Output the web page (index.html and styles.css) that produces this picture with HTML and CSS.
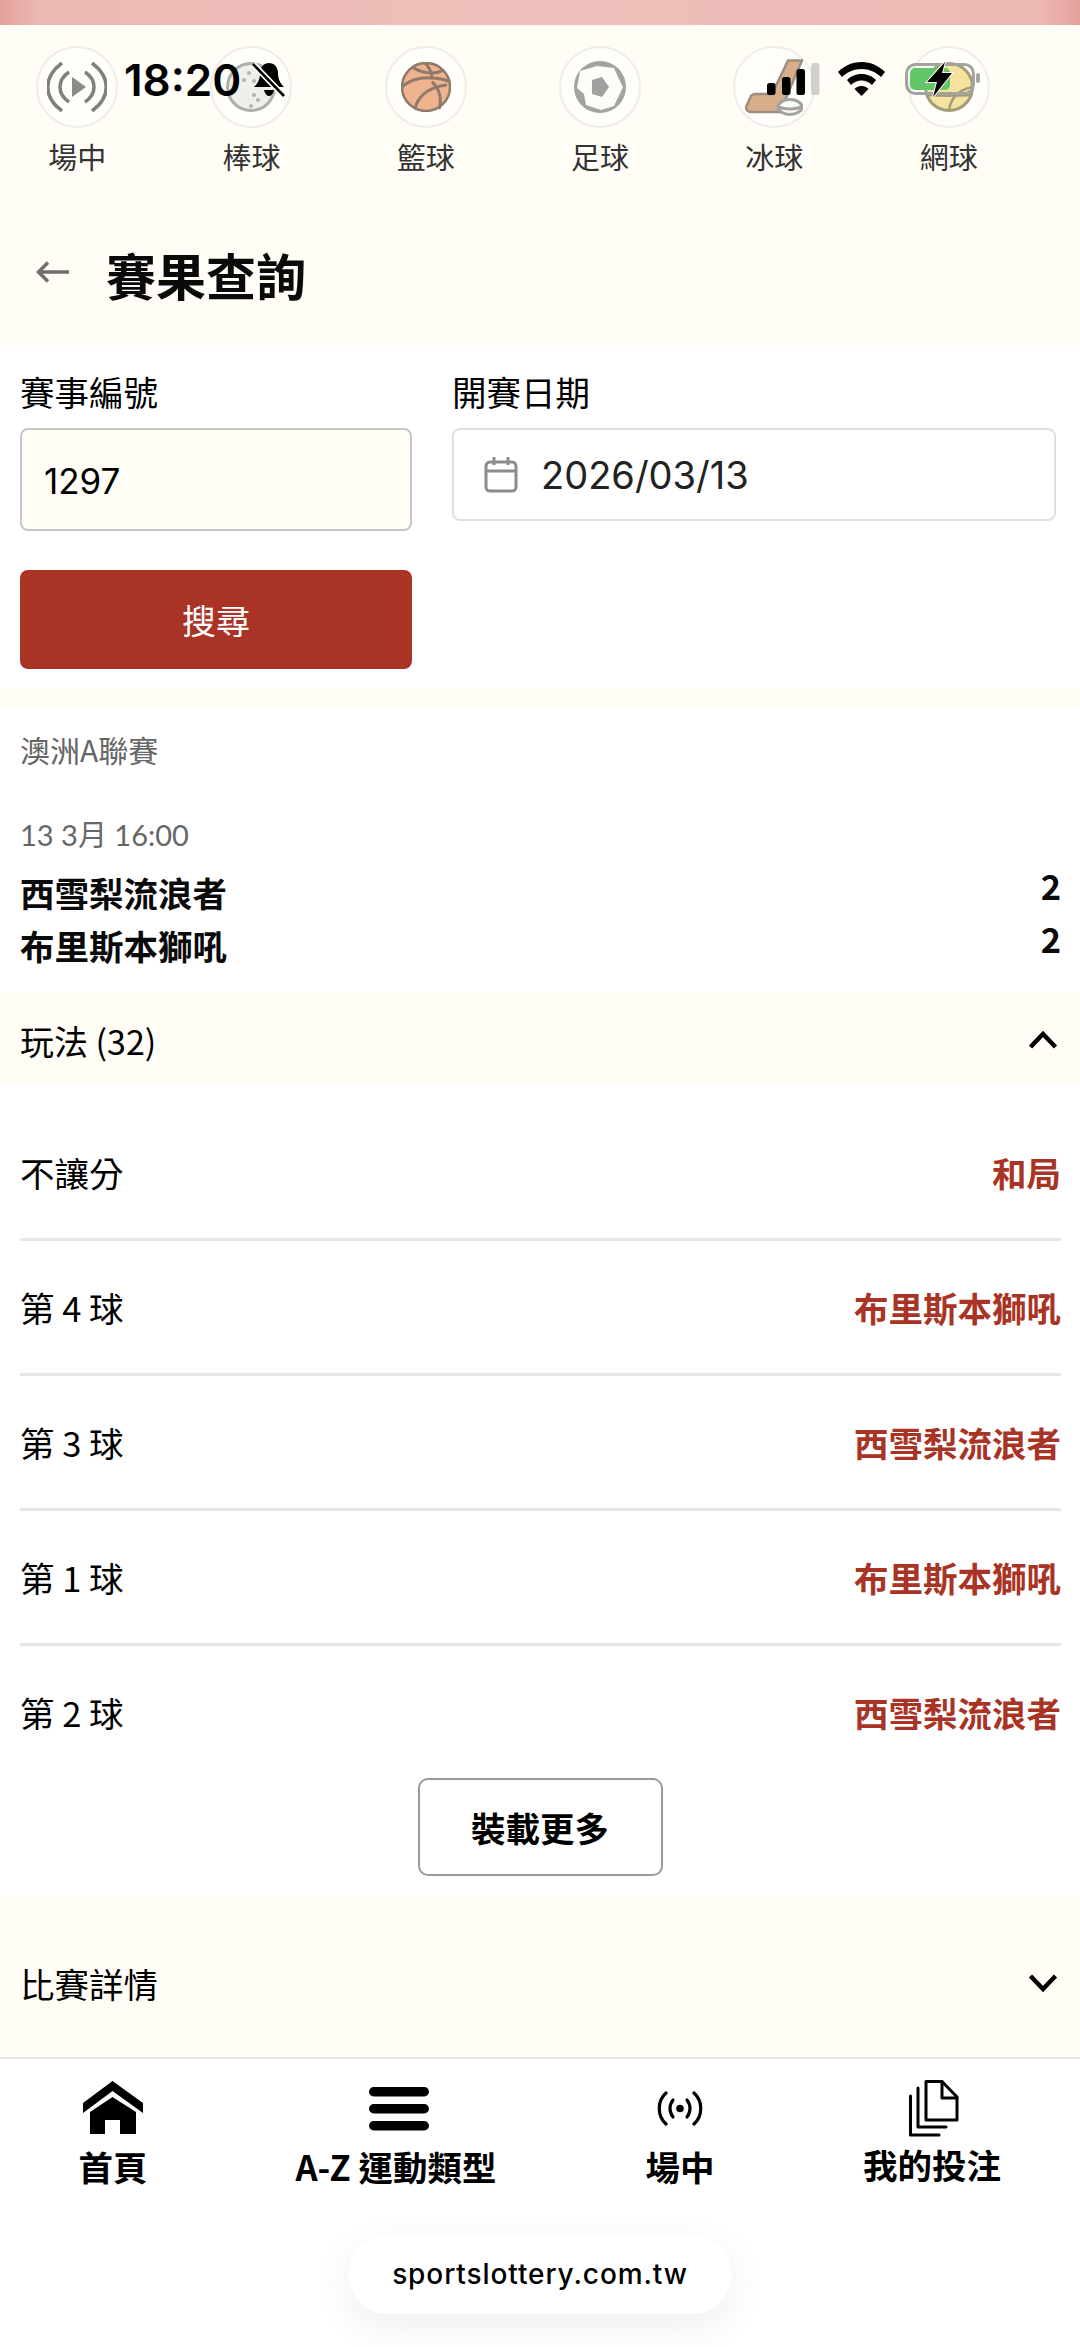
FILE: index.html
```html
<!DOCTYPE html>
<html>
<head>
    <title>賽果查詢</title>
    <link rel="stylesheet" href="styles.css">
</head>
<body>
    <!-- phone status bar sits over the sport list -->
    <div class="status-bar">
        <span class="status-time">18:20</span>
        <svg class="status-bell" viewBox="0 0 33 36"><path d="M17 1c5 0 9 4 9 10 0 6 2 10 6 14H2c4-4 6-8 6-14 0-6 4-10 9-10zM12 28h10c-1 4-3 6-5 6s-4-2-5-6z"/><path d="M1 2l31 32" stroke="#fffdf6" stroke-width="6"/><path d="M1 2l31 32" stroke="#000" stroke-width="2.6"/></svg>
        <svg class="status-signal" viewBox="0 0 53 33"><rect x="0" y="21" width="8.5" height="12" rx="2.5"/><rect x="15" y="15" width="8.5" height="18" rx="2.5"/><rect x="29.5" y="7" width="8.5" height="26" rx="2.5"/><rect x="44" y="1" width="8.5" height="32" rx="2.5" fill="#cfcfcb"/></svg>
        <svg class="status-wifi" viewBox="0 0 47 34"><path d="M23.5 0C33 0 41 4 47 10l-4 5c-5-5-12-8-19.5-8S9 10 4 15l-4-5C6 4 14 0 23.5 0z"/><path d="M23.5 12c6 0 11 2.5 14.5 6l-4 5c-3-3-6.5-4.5-10.5-4.5S16 20 13 23l-4-5c3.5-3.5 8.5-6 14.5-6z"/><path d="M23.5 24c3 0 5 1 7 3l-7 7-7-7c2-2 4-3 7-3z"/></svg>
        <svg class="status-battery" viewBox="0 0 78 38"><rect x="3.5" y="4.5" width="67" height="29" rx="9" fill="none" stroke="#a3a3a0" stroke-width="3"/><rect x="7" y="8" width="40" height="22" rx="5" fill="#62c768"/><rect x="73" y="13" width="4" height="10" rx="2" fill="#a3a3a0"/><path d="M42 2L24 22h10l-4 15 19-24H39z" stroke="#fffdf6" stroke-width="2" paint-order="stroke"/></svg>
    </div>

    <div class="top-tint"></div>

    <div class="head-area">
        <div class="sport-list">
            <div class="sport">
                <div class="sport-icon">
                    <svg viewBox="0 0 60 50" class="sport-svg sport-live"><g fill="none" stroke="#7f7f7d" stroke-width="3.5"><path d="M15 1C-4 15-4 35 15 49"/><path d="M45 1c19 14 19 34 0 48"/><path d="M22 10C10 18 10 32 22 40"/><path d="M38 10c12 8 12 22 0 30"/></g><path d="M25 15l14 10-14 10z" fill="#8a8a88"/></svg>
                </div>
                <span>場中</span>
            </div>
            <div class="sport">
                <div class="sport-icon">
                    <svg viewBox="0 0 50 50" class="sport-svg"><circle cx="25" cy="25" r="23.5" fill="#f0efeb" stroke="#aeaeab" stroke-width="3"/><g fill="#b3b3b0"><circle cx="23" cy="11" r="2"/><circle cx="18" cy="18" r="2"/><circle cx="28" cy="19" r="2"/><circle cx="32" cy="38" r="2"/><circle cx="25" cy="44" r="2"/><circle cx="28" cy="33" r="2"/></g></svg>
                </div>
                <span>棒球</span>
            </div>
            <div class="sport">
                <div class="sport-icon">
                    <svg viewBox="0 0 50 50" class="sport-svg"><circle cx="25" cy="25" r="24" fill="#efb38d" stroke="#8f7a6b" stroke-width="2.5"/><g fill="none" stroke="#8f7a6b" stroke-width="3"><path d="M1 25C8 18 20 15 30 16c7 0 13 1 19 4"/><path d="M11 5c6 4 14 6 20 6 4 0 8-1 11-3"/><path d="M24 1c4 4 7 10 7 16"/><path d="M14 47c2-11 12-22 32-24"/><path d="M38 47c3-9 1-20-7-27"/></g></svg>
                </div>
                <span>籃球</span>
            </div>
            <div class="sport">
                <div class="sport-icon">
                    <svg viewBox="0 0 52 52" class="sport-svg sport-ball"><circle cx="26" cy="26" r="26" fill="#a3a3a0"/><path d="M6 10l17-5 17 2 4 9 5 10-9 19-13 4-15-5-2-11-7-6z" fill="#fcfcf9"/><path d="M18 19l10-3 7 10-7 10-10-3z" fill="#a0a09e"/></svg>
                </div>
                <span>足球</span>
            </div>
            <div class="sport">
                <div class="sport-icon">
                    <svg viewBox="0 0 58 57" class="sport-svg sport-hockey"><path d="M43 1.5h14L35 53H6c-3 0-5-2-5-5l5-11c1-1 2-2 4-2h17z" fill="#d8ae8b" stroke="#9a8f82" stroke-width="2.5"/><ellipse cx="45" cy="48" rx="12" ry="7.5" fill="#fbfbf8" stroke="#a2a2a0" stroke-width="3"/><path d="M33 47c5 4 19 4 24 0" fill="none" stroke="#a2a2a0" stroke-width="3"/></svg>
                </div>
                <span>冰球</span>
            </div>
            <div class="sport">
                <div class="sport-icon">
                    <svg viewBox="0 0 50 50" class="sport-svg"><circle cx="25" cy="25" r="23.5" fill="#f5e29f" stroke="#a59c7a" stroke-width="3"/><g fill="none" stroke="#a59c7a" stroke-width="2.5"><path d="M2 33c15 1 30 1 46 0"/><path d="M25 48c2-13 10-20 23-23"/></g></svg>
                </div>
                <span>網球</span>
            </div>
        </div>

        <div class="page-title">
            <svg class="back-arrow" viewBox="0 0 34 22"><path d="M33 11H3M12 1.5L2.5 11l9.5 9.5" fill="none" stroke="#6f6f6d" stroke-width="3.5"/></svg>
            <h1>賽果查詢</h1>
        </div>
    </div>

    <div class="search-form">
        <div class="fields">
            <div class="field">
                <label>賽事編號</label>
                <div class="input input-id">1297</div>
            </div>
            <div class="field">
                <label>開賽日期</label>
                <div class="input input-date">
                    <svg viewBox="0 0 34 36"><g fill="none" stroke="#8c8c8c" stroke-width="3"><rect x="2" y="5" width="30" height="29" rx="4"/><path d="M2 14h30M10 0v8M24 0v8"/></g></svg>
                    <span>2026/03/13</span>
                </div>
            </div>
        </div>
        <button class="search-btn">搜尋</button>
    </div>

    <div class="gap-band"></div>

    <div class="match">
        <div class="league">澳洲A聯賽</div>
        <div class="match-time">13 3月 16:00</div>
        <div class="team-row"><span>西雪梨流浪者</span><span class="score">2</span></div>
        <div class="team-row"><span>布里斯本獅吼</span><span class="score">2</span></div>
    </div>

    <div class="band band-plays">
        <span>玩法 (32)</span>
        <svg class="chevron" viewBox="0 0 30 18"><path d="M2.5 16L15 3l12.5 13" fill="none" stroke="#000" stroke-width="4.5"/></svg>
    </div>

    <div class="result-list">
        <div class="result-row"><span>不讓分</span><span class="result-val">和局</span></div>
        <div class="result-row"><span>第 4 球</span><span class="result-val">布里斯本獅吼</span></div>
        <div class="result-row"><span>第 3 球</span><span class="result-val">西雪梨流浪者</span></div>
        <div class="result-row"><span>第 1 球</span><span class="result-val">布里斯本獅吼</span></div>
        <div class="result-row"><span>第 2 球</span><span class="result-val">西雪梨流浪者</span></div>
    </div>

    <div class="more-wrap">
        <button class="more-btn">裝載更多</button>
    </div>

    <div class="band band-details">
        <span>比賽詳情</span>
        <svg class="chevron" viewBox="0 0 30 18"><path d="M2.5 2L15 15 27.5 2" fill="none" stroke="#000" stroke-width="4.5"/></svg>
    </div>

    <div class="bottom-nav">
        <div class="nav-item nav-home">
            <svg class="nav-icon" width="60" height="54" viewBox="0 0 60 54"><path d="M29.5 0L60 22v10L29.5 10 0 32V22z"/><path d="M29.5 16L53 31v22H37V39H22v14H7V31z"/></svg>
            <span>首頁</span>
        </div>
        <div class="nav-item nav-az">
            <svg class="nav-icon" width="60" height="44" viewBox="0 0 60 44"><rect y="0" width="60" height="9.5" rx="4.7"/><rect y="17" width="60" height="9.5" rx="4.7"/><rect y="34" width="60" height="9.5" rx="4.7"/></svg>
            <span>A-Z 運動類型</span>
        </div>
        <div class="nav-item nav-live">
            <svg class="nav-icon" width="46" height="36" viewBox="0 0 46 36"><circle cx="23" cy="17.5" r="3.8"/><g fill="none" stroke="#000" stroke-width="3.2" stroke-linecap="round"><path d="M9 2C0 10 0 25 9 33"/><path d="M37 2c9 8 9 23 0 31"/><path d="M16 9c-4 5-4 12 0 17"/><path d="M30 9c4 5 4 12 0 17"/></g></svg>
            <span>場中</span>
        </div>
        <div class="nav-item nav-bets">
            <svg class="nav-icon" width="50" height="57" viewBox="0 0 50 57"><g fill="none" stroke="#000" stroke-width="3" stroke-linecap="round" stroke-linejoin="round"><path d="M17 1.5h16L48 17v23H17z"/><path d="M33 1.5V18h15"/><path d="M9 8v39h28"/><path d="M1.5 16v39H30"/></g></svg>
            <span>我的投注</span>
        </div>
    </div>

    <div class="url-wrap">
        <div class="url-pill">sportslottery.com.tw</div>
    </div>
</body>
</html>
```

FILE: styles.css
```css
/* Page */
body {
    margin: 0;
    width: 1080px;
    height: 2347px;
    overflow: hidden;
    position: relative;
    background-color: #fff;
    color: #000;
    font-family: "Noto Sans CJK TC", "Noto Sans", sans-serif;
    font-size: 34.5px;
}

/* Status bar */
.status-bar {
    position: absolute;
    top: 0;
    left: 0;
    width: 1080px;
    height: 100px;
}

.status-bar svg {
    position: absolute;
}

.status-time {
    position: absolute;
    left: 124px;
    top: 53px;
    font-family: Inter, sans-serif;
    font-size: 44px;
    line-height: 54px;
    font-weight: 600;
}

.status-bell {
    left: 252px;
    top: 62px;
    width: 33px;
    height: 36px;
}

.status-signal {
    left: 767px;
    top: 62px;
    width: 53px;
    height: 33px;
}

.status-wifi {
    left: 838px;
    top: 62px;
    width: 47px;
    height: 34px;
}

.status-battery {
    left: 903px;
    top: 60px;
    width: 78px;
    height: 38px;
}

/* Top strip */
.top-tint {
    height: 25px;
    background: linear-gradient(90deg, #e5a09b 0, #edb9b5 40px, #eebfba 50%, #edb9b5 1040px, #e5a09b 100%);
}

/* Sports and title */
.head-area {
    height: 320px;
    background-color: #fffdf6;
}

.sport-list {
    display: flex;
    margin-left: -10px;
    padding-top: 21px;
}

.sport {
    flex: 0 0 174.3px;
    display: flex;
    flex-direction: column;
    align-items: center;
    color: #333;
    font-size: 29px;
    line-height: 40px;
}

.sport-icon {
    width: 82px;
    height: 82px;
    margin-bottom: 8px;
    box-sizing: border-box;
    border: 2.5px solid #eeedea;
    border-radius: 50%;
    background-color: #fffefa;
    display: flex;
    align-items: center;
    justify-content: center;
}

.sport-svg {
    width: 50px;
    height: 50px;
    flex: none;
}

.sport-live {
    width: 60px;
}

.sport-ball {
    width: 52px;
    height: 52px;
}

.sport-hockey {
    width: 58px;
    height: 57px;
}

.page-title {
    display: flex;
    align-items: center;
    padding: 63px 0 0 36px;
}

.back-arrow {
    width: 34px;
    height: 22px;
    margin: 0 36px 4px 0;
}

.page-title h1 {
    margin: 0;
    font-size: 50px;
    line-height: 70px;
    font-weight: 700;
    color: #0a0a0a;
}

/* Search form */
.search-form {
    padding: 22px 20px 19px;
}

.fields {
    display: grid;
    grid-template-columns: 392px 604px;
    column-gap: 40px;
    align-items: start;
}

.field label {
    display: block;
    line-height: 48px;
    margin-bottom: 13px;
}

.input {
    box-sizing: border-box;
    border-radius: 8px;
    display: flex;
    align-items: center;
}

.input-id {
    height: 103px;
    padding: 3px 0 0 22px;
    background-color: #fffdf6;
    border: 2px solid #c6c6c4;
    font-family: Inter, sans-serif;
    font-size: 35px;
}

.input-date {
    height: 93px;
    padding-left: 30px;
    border: 2px solid #e0e0e0;
    font-family: Inter, sans-serif;
    font-size: 38px;
    color: #222;
}

.input-date svg {
    width: 34px;
    height: 36px;
    margin-right: 23px;
}

.search-btn {
    display: block;
    width: 392px;
    height: 99px;
    margin-top: 39px;
    border: none;
    border-radius: 8px;
    background-color: #a93425;
    color: #fff;
    font-family: inherit;
    font-size: 34px;
}

.gap-band {
    height: 20px;
    background-color: #fffdf6;
}

/* Match */
.match {
    padding: 21px 19px 20px 20px;
}

.league,
.match-time {
    line-height: 40px;
    color: #666;
}

.league {
    font-size: 30px;
}

.match-time {
    margin: 46px 0 11px;
    font-family: Lato, "Noto Sans CJK TC", sans-serif;
    font-size: 29px;
}

.team-row {
    display: flex;
    justify-content: space-between;
    align-items: flex-start;
    font-weight: 700;
    line-height: 53px;
    color: #0a0a0a;
}

.score {
    line-height: 38px;
}

/* Collapsible bands */
.band {
    display: flex;
    justify-content: space-between;
    align-items: center;
    box-sizing: border-box;
    padding: 0 22px 0 20px;
    background-color: #fffdf6;
}

.band-plays {
    height: 93px;
    padding-top: 3px;
    font-size: 34px;
}

.band-details {
    height: 161px;
    padding-top: 12px;
}

.chevron {
    width: 30px;
    height: 18px;
}

/* Result rows */
.result-list {
    padding: 21px 19px 0 20px;
}

.result-row {
    display: flex;
    justify-content: space-between;
    align-items: center;
    box-sizing: border-box;
    height: 135px;
    border-bottom: 3px solid #e6e6e6;
}

.result-row:last-child {
    height: 132px;
    border-bottom: none;
}

.result-val {
    color: #a93425;
    font-weight: 700;
}

.more-wrap {
    display: flex;
    justify-content: center;
    padding-bottom: 20px;
}

.more-btn {
    width: 245px;
    height: 98px;
    border: 2px solid #9a9a9a;
    border-radius: 10px;
    background-color: #fff;
    color: #000;
    font-family: inherit;
    font-size: 34.5px;
    font-weight: 700;
}

/* Bottom nav */
.bottom-nav {
    display: flex;
    height: 150px;
    padding-right: 10px;
    border-top: 2px solid #e5e5e5;
}

.nav-item {
    display: flex;
    flex-direction: column;
    align-items: center;
    font-weight: 700;
    line-height: 48px;
}

.nav-item span {
    white-space: nowrap;
}

.nav-icon {
    flex: none;
}

.nav-home {
    width: 226px;
    padding-top: 22px;
}

.nav-home .nav-icon {
    margin-bottom: 7px;
}

.nav-az {
    width: 340px;
    padding-top: 28px;
}

.nav-az .nav-icon {
    margin: 0 0 11px 5px;
}

.nav-live {
    width: 228px;
    padding-top: 32px;
}

.nav-live .nav-icon {
    margin-bottom: 15px;
}

.nav-bets {
    width: 276px;
    padding-top: 21px;
}

.nav-bets .nav-icon {
    margin: 0 0 3px 4px;
}

/* Browser url pill */
.url-wrap {
    display: flex;
    justify-content: center;
    padding-top: 26px;
}

.url-pill {
    width: 384px;
    height: 79px;
    border-radius: 40px;
    background-color: #fff;
    box-shadow: 0 12px 40px rgba(0, 0, 0, 0.07);
    text-align: center;
    line-height: 78px;
    font-family: Inter, sans-serif;
    font-size: 28px;
    font-weight: 500;
    letter-spacing: 0.9px;
}
```
